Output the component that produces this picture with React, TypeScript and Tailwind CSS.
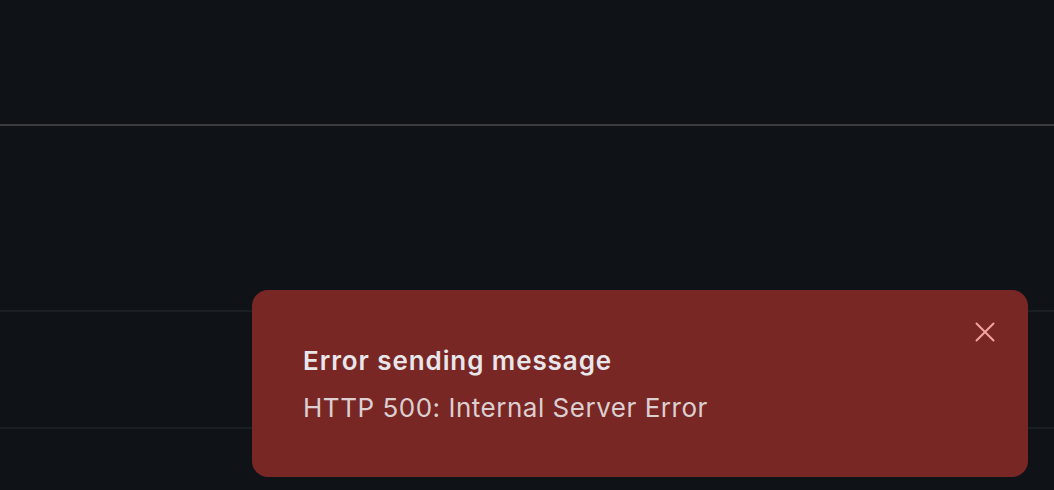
import React from 'react';

const CloseIcon = () => (
  <svg width="20" height="20" viewBox="0 0 20 20" fill="none" stroke="currentColor" strokeWidth="2" strokeLinecap="round">
    <path d="M1.5 1.5 18.5 18.5M18.5 1.5 1.5 18.5" />
  </svg>
);

const ErrorToast: React.FC<{ title: string; message: string }> = ({ title, message }) => (
  <div className="absolute right-[26px] bottom-[13px] w-[776px] h-[187px] rounded-2xl bg-[#792724] pl-[51px] pt-[55px]">
    <h3 className="text-[26px] leading-[32px] font-semibold tracking-[0.035em] text-[#e8e6ea]">{title}</h3>
    <p className="mt-[15px] text-[26px] leading-[32px] tracking-[0.02em] text-[#dccfd1]">{message}</p>
    <button className="absolute right-[33px] top-[32px] text-[#f4a3a0]">
      <CloseIcon />
    </button>
  </div>
);

export default function App() {
  return (
    <div
      className="relative w-[1054px] h-[490px] overflow-hidden bg-[#0f1217]"
      style={{ fontFamily: 'Inter, "Noto Sans", sans-serif' }}
    >
      <header className="h-[126px] border-b-2 border-[#3a3b3d]" />
      <div className="h-[184px]" />
      <div className="h-[119px] border-y-2 border-[#1a1e25]" />
      <ErrorToast title="Error sending message" message="HTTP 500: Internal Server Error" />
    </div>
  );
}
